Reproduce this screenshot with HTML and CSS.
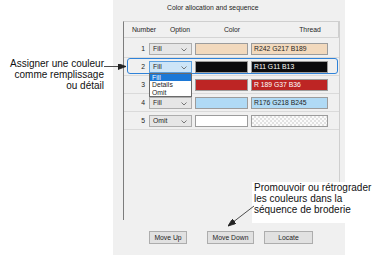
FILE: index.html
```html
<!DOCTYPE html>
<html lang="fr">
<head>
    <meta charset="UTF-8">
    <meta name="viewport" content="width=device-width, initial-scale=1.0">
    <title>Color allocation and sequence</title>
    <link rel="stylesheet" href="styles.css">
</head>
<body>
    <div class="page">
        <div class="dialog">
            <div class="dialog-title">Color allocation and sequence</div>
            <div class="list">
                <div class="list-head">
                    <span>Number</span>
                    <span>Option</span>
                    <span>Color</span>
                    <span>Thread</span>
                </div>
                <div class="row">
                    <span class="num">1</span>
                    <span class="select">Fill<svg class="chev" viewBox="0 0 6 4"><polyline points="0.5,0.5 3,3 5.5,0.5"/></svg></span>
                    <span class="swatch peach"></span>
                    <span class="thread peach">R242 G217 B189</span>
                </div>
                <div class="row selected">
                    <span class="num">2</span>
                    <span class="select open">Fill<svg class="chev" viewBox="0 0 6 4"><polyline points="0.5,0.5 3,3 5.5,0.5"/></svg>
                        <span class="dropdown">
                            <span class="item active">Fill</span>
                            <span class="item">Details</span>
                            <span class="item">Omit</span>
                        </span>
                    </span>
                    <span class="swatch black"></span>
                    <span class="thread black">R11 G11 B13</span>
                </div>
                <div class="row">
                    <span class="num">3</span>
                    <!-- covered by the open dropdown of row 2 -->
                    <span class="select"></span>
                    <span class="swatch red"></span>
                    <span class="thread red">R 189 G37 B36</span>
                </div>
                <div class="row">
                    <span class="num">4</span>
                    <span class="select">Fill<svg class="chev" viewBox="0 0 6 4"><polyline points="0.5,0.5 3,3 5.5,0.5"/></svg></span>
                    <span class="swatch sky"></span>
                    <span class="thread sky">R176 G218 B245</span>
                </div>
                <div class="row">
                    <span class="num">5</span>
                    <span class="select">Omit<svg class="chev" viewBox="0 0 6 4"><polyline points="0.5,0.5 3,3 5.5,0.5"/></svg></span>
                    <span class="swatch"></span>
                    <span class="thread none"></span>
                </div>
            </div>
            <div class="buttons">
                <button class="btn btn-up">Move Up</button>
                <button class="btn btn-down">Move Down</button>
                <button class="btn btn-locate">Locate</button>
            </div>
        </div>

        <div class="callout callout-left">Assigner une couleur<br>comme remplissage<br>ou détail</div>
        <div class="callout callout-right">Promouvoir ou rétrograder<br>les couleurs dans la<br>séquence de broderie</div>

        <svg class="arrows" viewBox="0 0 389 269">
            <defs>
                <marker id="head" viewBox="0 0 8 6" refX="8" refY="3" markerWidth="8" markerHeight="6" markerUnits="userSpaceOnUse" orient="auto">
                    <path d="M0,0 L8,3 L0,6 Z"/>
                </marker>
            </defs>
            <line x1="104" y1="66.5" x2="126" y2="66.5" marker-end="url(#head)"/>
            <line x1="254" y1="206" x2="228" y2="226" marker-end="url(#head)"/>
        </svg>
    </div>
</body>
</html>
```

FILE: styles.css
```css
body {
    margin: 0;
    background: #fff;
}

.page {
    position: relative;
    width: 389px;
    height: 269px;
    overflow: hidden;
    background: #fff;
    font-family: 'Liberation Sans', Arial, sans-serif;
}

.dialog {
    margin-left: 113px;
    width: 232px;
    height: 255px;
    background: #f0f0f0;
    display: flex;
    flex-direction: column;
    font-size: 6.8px;
    color: #1e1e1e;
}

.dialog-title {
    height: 21px;
    padding-left: 54px;
    line-height: 15px;
}

.list {
    margin-left: 10px;
    width: 217px;
    height: 199px;
    box-sizing: border-box;
    border: 1px solid #cfcfcf;
    border-left-color: #7c7c7c;
    border-bottom: none;
}

.list-head {
    display: grid;
    grid-template-columns: 40px 32px 72px 1fr;
    height: 16px;
    line-height: 15px;
    text-align: center;
    box-sizing: border-box;
    border-bottom: 1px solid #d4d4d4;
    margin-bottom: 2px;
}

.list-head span:last-child {
    border-right: 1px solid #cfcfcf;
    padding-left: 14px;
}

.row {
    position: relative;
    display: grid;
    grid-template-columns: 22px 43px 53px 77px;
    column-gap: 3px;
    align-items: center;
    height: 18px;
    box-sizing: border-box;
    border-bottom: 1px solid #dadada;
}

.row.selected::before {
    content: '';
    position: absolute;
    top: 0;
    bottom: 1px;
    left: 3px;
    right: 1px;
    border: 1.5px solid #2f82d8;
    border-radius: 3px;
}

.num {
    text-align: right;
    padding-right: 1px;
}

.select {
    position: relative;
    height: 12px;
    box-sizing: border-box;
    border: 1px solid #adadad;
    background: #e6e6e6;
    padding-left: 3px;
    line-height: 10px;
}

.select.open {
    background: #cde5f7;
    border-color: #5a9fe0;
}

.chev {
    position: absolute;
    right: 4px;
    top: 4px;
    width: 6px;
    height: 4px;
    fill: none;
    stroke: #6a6a6a;
    stroke-width: 0.9;
}

.dropdown {
    position: absolute;
    top: 11px;
    left: -1px;
    width: 43px;
    z-index: 2;
    display: flex;
    flex-direction: column;
    box-sizing: border-box;
    background: #fff;
    border: 1px solid #6a6a6a;
}

.dropdown .item {
    height: 7.5px;
    line-height: 7.5px;
    padding-left: 2px;
}

.dropdown .item.active {
    background: #1c78d6;
    color: #fff;
}

.swatch,
.thread {
    height: 12px;
    box-sizing: border-box;
    border: 1px solid #9c9c9c;
    background: #fff;
}

.thread {
    padding-left: 2px;
    line-height: 10px;
    white-space: nowrap;
}

.peach { background: #f2d9bd; }
.black { background: #0b0b0d; color: #fff; }
.red { background: #bd2524; color: #fff; }
.sky { background: #b0daf5; }

.thread.none {
    background: repeating-conic-gradient(#e2e2e2 0 25%, #fbfbfb 0 50%) 0 0 / 4px 4px;
}

.buttons {
    margin-top: auto;
    display: flex;
    height: 13px;
    margin-bottom: 11px;
}

.btn {
    height: 13px;
    padding: 0;
    box-sizing: border-box;
    border: 1px solid #adadad;
    background: #e1e1e1;
    font-family: inherit;
    font-size: 6.8px;
    color: #1e1e1e;
}

.btn-up { margin-left: 36px; width: 38px; }
.btn-down { margin-left: 20px; width: 47px; }
.btn-locate { margin-left: 10px; width: 49px; }

.callout {
    position: absolute;
    font-size: 10px;
    line-height: 11px;
    color: #111;
}

.callout-left {
    top: 58px;
    right: 285px;
    text-align: right;
}

.callout-right {
    top: 182px;
    left: 252px;
    width: 137px;
    height: 41px;
    padding-left: 2px;
    box-sizing: border-box;
    background: #fff;
}

.arrows {
    position: absolute;
    left: 0;
    top: 0;
    width: 389px;
    height: 269px;
    stroke: #222;
    stroke-width: 0.8;
    fill: #222;
}
```
